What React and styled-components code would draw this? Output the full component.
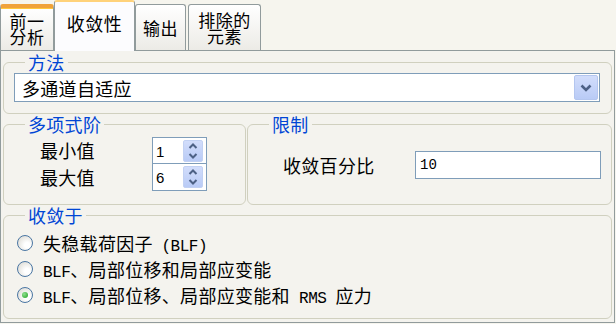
import React from "react";
import styled, { createGlobalStyle, css } from "styled-components";

const GlobalStyle = createGlobalStyle`
  html, body {
    margin: 0;
    padding: 0;
    background: #f6f5ee;
  }
  body {
    width: 616px;
    height: 324px;
    overflow: hidden;
    font-family: "Noto Sans CJK SC", sans-serif;
    color: #000;
  }
`;

const Window = styled.div`
  display: flex;
  flex-direction: column;
  width: 616px;
`;

const TabStrip = styled.div`
  display: flex;
  align-items: flex-end;
  height: 50px;
`;

const Tab = styled.div`
  box-sizing: border-box;
  display: flex;
  align-items: center;
  justify-content: center;
  width: ${(p) => p.width}px;
  margin-right: ${(p) => p.gap || 0}px;
  height: 46px;
  border: 1px solid #919b9c;
  border-bottom: none;
  border-radius: 3px 3px 0 0;
  background: linear-gradient(#ffffff, #ecebe6);
  font-size: 17px;
  line-height: 16px;
  letter-spacing: 0.5px;
  text-align: center;
  white-space: pre-line;

  ${(p) =>
    p.hot &&
    css`
      border-top: 4px solid #f0a23a;
      box-shadow: inset 0 1px 0 #ffc83c;
    `}

  ${(p) =>
    p.active &&
    css`
      position: relative;
      z-index: 1;
      height: 51px;
      margin-bottom: -1px;
      background: #fcfcfe;
      border-top: 2px solid #ffd27a;
      font-size: 18px;
      line-height: 20px;
      padding-bottom: 8px;
    `}
`;

const Page = styled.div`
  box-sizing: border-box;
  width: 615px;
  height: 273px;
  border: 1px solid #919b9c;
  background: #f4f3ee;
  padding: 1px 2px 2px;
  display: flex;
  flex-direction: column;
`;

const Group = styled.fieldset`
  margin: 0;
  padding: 0;
  min-width: 0;
  border: 1px solid #d0d0bf;
  border-radius: 6px;
`;

const Legend = styled.legend`
  margin-left: 21px;
  padding: 0 3px;
  color: #0046d5;
  font-size: 18px;
  line-height: 20px;
  letter-spacing: 0.3px;
`;

const GroupBody = styled.div`
  padding: ${(p) => p.pad};
`;

const Row = styled.div`
  display: grid;
  grid-template-columns: 243px 1fr;
  column-gap: 1px;
`;

const Combo = styled.div`
  box-sizing: border-box;
  display: flex;
  align-items: center;
  height: 29px;
  border: 1px solid #7f9db9;
  background: #fff;
  padding: 0 1px 0 7px;
  font-size: 18px;
  letter-spacing: 0.3px;
`;

const ComboText = styled.span`
  flex: 1;
`;

const DropButton = styled.span`
  box-sizing: border-box;
  display: flex;
  align-items: center;
  justify-content: center;
  width: 24px;
  height: 25px;
  border: 1px solid #b4c6ef;
  border-radius: 2px;
  background: linear-gradient(#d2ddfb, #b9cbf6);
`;

const OrderGrid = styled.div`
  display: grid;
  grid-template-columns: 112px 55px;
  grid-auto-rows: 27px;
  align-items: center;
`;

const Label = styled.span`
  font-size: 18px;
  letter-spacing: 0.3px;
  line-height: 27px;
`;

const Spinner = styled.div`
  box-sizing: border-box;
  display: flex;
  align-items: center;
  height: 28px;
  margin-top: ${(p) => (p.first ? 0 : -1)}px;
  align-self: start;
  border: 1px solid #7f9db9;
  background: #fff;
  padding: 2px 3px 2px 3px;
`;

const SpinValue = styled.span`
  flex: 1;
  font-family: "Liberation Sans", sans-serif;
  font-size: 15px;
`;

const SpinButtons = styled.span`
  display: flex;
  flex-direction: column;
  width: 20px;
  height: 22px;
  border-radius: 2px;
  background: linear-gradient(#d2ddfb, #b9cbf6);
  border: 1px solid #c2d1f3;
  box-sizing: border-box;
  align-items: center;
  justify-content: space-around;
`;

const LimitRow = styled.div`
  display: flex;
  align-items: center;
`;

const LimitLabel = styled(Label)`
  width: 132px;
  flex: none;
`;

const TextInput = styled.div`
  box-sizing: border-box;
  flex: 1;
  height: 28px;
  border: 1px solid #7f9db9;
  background: #fff;
  padding: 0 4px;
  display: flex;
  align-items: center;
  font-family: "Liberation Mono", monospace;
  font-size: 14px;
`;

const RadioList = styled.div`
  display: flex;
  flex-direction: column;
`;

const RadioRow = styled.label`
  display: flex;
  align-items: center;
  gap: 10px;
  height: 26px;
  font-size: 18px;
  letter-spacing: 0.3px;
  white-space: pre;
`;

const RadioDot = styled.span`
  box-sizing: border-box;
  display: flex;
  align-items: center;
  justify-content: center;
  width: 16px;
  height: 16px;
  border-radius: 50%;
  border: 1px solid #4a76a3;
  background: radial-gradient(circle at 65% 65%, #ffffff 20%, #d6d4cc 100%);

  &::after {
    content: "";
    display: ${(p) => (p.checked ? "block" : "none")};
    width: 6px;
    height: 6px;
    border-radius: 50%;
    background: radial-gradient(circle at 35% 35%, #8fe08f, #21a121);
  }
`;

const Latin = styled.span`
  font-family: "Liberation Mono", monospace;
  font-size: 16px;
  letter-spacing: -0.5px;
`;

const Chevron = ({ up }) => (
  <svg width="10" height="6" viewBox="0 0 10 6">
    <path
      d={up ? "M1.5 5 L5 1.5 L8.5 5" : "M1.5 1 L5 4.5 L8.5 1"}
      fill="none"
      stroke="#4d6185"
      strokeWidth="2"
    />
  </svg>
);

const NumberSpin = ({ value, first }) => (
  <Spinner first={first}>
    <SpinValue>{value}</SpinValue>
    <SpinButtons>
      <Chevron up />
      <Chevron />
    </SpinButtons>
  </Spinner>
);

const radios = [
  { text: ["失稳载荷因子  ", <Latin key="a">(BLF)</Latin>], checked: false },
  { text: [<Latin key="a">BLF</Latin>, "、局部位移和局部应变能"], checked: false },
  {
    text: [
      <Latin key="a">BLF</Latin>,
      "、局部位移、局部应变能和",
      <Latin key="b"> RMS </Latin>,
      "应力",
    ],
    checked: true,
  },
];

export default function App() {
  return (
    <>
      <GlobalStyle />
      <Window>
        <TabStrip>
          <Tab width={54} hot>
            {"前一\n分析"}
          </Tab>
          <Tab width={81} active>
            收敛性
          </Tab>
          <Tab width={51} gap={2}>
            输出
          </Tab>
          <Tab width={73}>{"排除的\n元素"}</Tab>
        </TabStrip>
        <Page>
          <Group>
            <Legend>方法</Legend>
            <GroupBody pad="1px 11px 11px 10px">
              <Combo>
                <ComboText>多通道自适应</ComboText>
                <DropButton>
                  <svg width="12" height="8" viewBox="0 0 12 8">
                    <path d="M1.5 1.5 L6 6 L10.5 1.5" fill="none" stroke="#4d6185" strokeWidth="2.6" />
                  </svg>
                </DropButton>
              </Combo>
            </GroupBody>
          </Group>
          <Row>
            <Group>
              <Legend>多项式阶</Legend>
              <GroupBody pad="3px 0 13px 36px">
                <OrderGrid>
                  <Label>最小值</Label>
                  <NumberSpin value="1" first />
                  <Label>最大值</Label>
                  <NumberSpin value="6" />
                </OrderGrid>
              </GroupBody>
            </Group>
            <Group>
              <Legend>限制</Legend>
              <GroupBody pad="17px 10px 0 35px">
                <LimitRow>
                  <LimitLabel>收敛百分比</LimitLabel>
                  <TextInput>10</TextInput>
                </LimitRow>
              </GroupBody>
            </Group>
          </Row>
          <Group>
            <Legend>收敛于</Legend>
            <GroupBody pad="5px 10px 10px 13px">
              <RadioList>
                {radios.map((r, i) => (
                  <RadioRow key={i}>
                    <RadioDot checked={r.checked} />
                    <span>{r.text}</span>
                  </RadioRow>
                ))}
              </RadioList>
            </GroupBody>
          </Group>
        </Page>
      </Window>
    </>
  );
}
